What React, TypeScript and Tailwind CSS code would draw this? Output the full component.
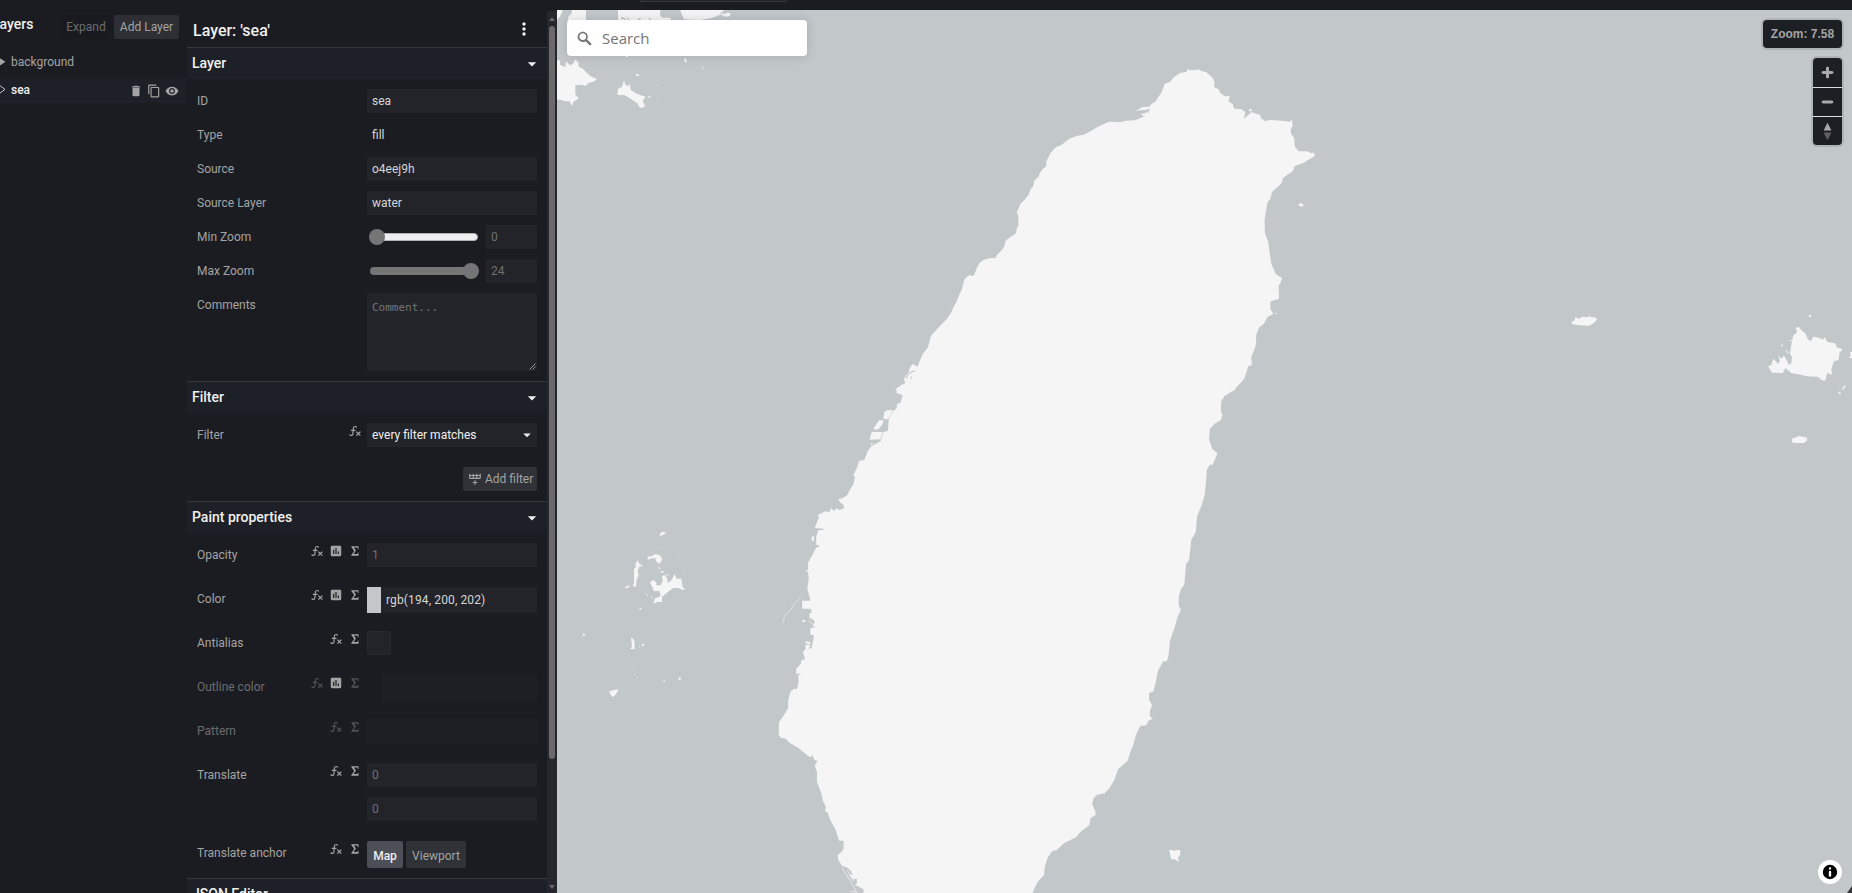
import type { ReactNode } from "react";
import { MdArrowDropDown, MdContentCopy, MdDelete, MdInsertChart, MdMoreVert, MdVisibility } from "react-icons/md";

const FX =
  "M12.42,5.29C11.32,5.19 10.35,6 10.25,7.11L10,10H12.82V12H9.82L9.38,17.07C9.18,19.27 7.24,20.9 5.04,20.7C3.79,20.59 2.66,19.9 2,18.83L3.5,17.33C3.83,18.38 4.96,18.97 6,18.63C6.78,18.39 7.33,17.7 7.4,16.89L7.82,12H4.82V10H8L8.27,6.93C8.46,4.73 10.39,3.1 12.6,3.28C13.86,3.39 15,4.09 15.66,5.17L14.16,6.67C13.91,5.9 13.23,5.36 12.42,5.29M22,13.65L20.59,12.24L17.76,15.07L14.93,12.24L13.5,13.65L16.35,16.5L13.5,19.33L14.93,20.75L17.76,17.89L20.59,20.72L22,19.31L19.17,16.5L22,13.65Z";
const SIGMA = "M5,4H18V9H17L16,6H10.06L13.65,11.13L9.54,17H16L17,15H18V20H5L10.6,12L5,4Z";
const TABLE_PLUS =
  "M22,10A2,2 0 0,1 20,12H4A2,2 0 0,1 2,10V3H4V5H8V3H10V5H14V3H16V5H20V3H22V10M4,10H8V7H4V10M10,10H14V7H10V10M20,10V7H16V10H20M11,14H13V17H16V19H13V22H11V19H8V17H11V14Z";

function Glyph({ d }: { d: string }) {
  return (
    <svg width="14" height="14" viewBox="0 0 24 24" fill="currentColor">
      <path d={d} />
    </svg>
  );
}

type IconKind = "fx" | "chart" | "sigma";

function RowIcons({ kinds, dim }: { kinds: IconKind[]; dim?: boolean }) {
  return (
    <div className="flex h-4 items-center gap-[5px] pr-[5px] text-[#a4a4a4]">
      {kinds.map((k) => (
        <span key={k} className={dim && k !== "chart" ? "opacity-40" : ""}>
          {k === "fx" && <Glyph d={FX} />}
          {k === "chart" && <MdInsertChart size={14} />}
          {k === "sigma" && <Glyph d={SIGMA} />}
        </span>
      ))}
    </div>
  );
}

function Row({ label, icons = [], dim, children }: { label: string; icons?: IconKind[]; dim?: boolean; children: ReactNode }) {
  return (
    <div className="flex items-start px-[10px]">
      <div className="flex w-[170px] justify-between">
        <span className={dim ? "leading-6 text-[#6b6c6f]" : "leading-6 text-[#a4a4a4]"}>{label}</span>
        <RowIcons kinds={icons} dim={dim} />
      </div>
      <div className="w-[170px]">{children}</div>
    </div>
  );
}

function Field({ value, hint, dim }: { value?: string; hint?: string; dim?: boolean }) {
  return (
    <div className={dim ? "h-6 bg-[#1e1f24]" : "h-6 bg-[#232429] px-[5px] leading-6 text-[#d6d6d6]"}>
      {value}
      <span className="text-[#6f7073]">{hint}</span>
    </div>
  );
}

function SectionHeader({ title }: { title: string }) {
  return (
    <div className="flex h-8 shrink-0 items-center justify-between border-t border-[#36383e] bg-[#1d2026] pr-[5px] pl-[5px]">
      <span className="pb-[2px] text-sm font-medium text-[#f0f0f0]">{title}</span>
      <MdArrowDropDown size={20} className="text-[#f0f0f0]" />
    </div>
  );
}

function Slider({ value, full }: { value: string; full?: boolean }) {
  return (
    <div className="flex items-center justify-between">
      <div
        className={
          full
            ? "ml-[3px] flex h-2 w-[108px] items-center justify-end rounded-full bg-[#757575]"
            : "ml-[3px] flex h-2 w-[108px] items-center rounded-full border border-[#b2b2b2] bg-[#efefef]"
        }
      >
        <div className={full ? "-mr-[1px] size-4 shrink-0 rounded-full bg-[#757575]" : "-ml-[2px] size-4 shrink-0 rounded-full bg-[#757575]"} />
      </div>
      <div className="w-[51px]">
        <Field hint={value} />
      </div>
    </div>
  );
}

function LayerList() {
  return (
    <div className="w-[187px] shrink-0 overflow-hidden pt-[5px]">
      <div className="flex h-6 justify-between pr-2">
        <span className="-ml-[8px] text-sm leading-[18px] font-medium text-[#f0f0f0]">Layers</span>
        <div className="flex gap-[3px]">
          <div className="w-[50px] rounded-xs bg-[#191a1f] text-center leading-6 text-[#6b6c70]">Expand</div>
          <div className="w-[65px] rounded-xs bg-[#2d2f34] text-center leading-6 text-[#a4a4a4]">Add Layer</div>
        </div>
      </div>
      <div className="mt-[10px] flex h-[26px] items-center text-[#a4a4a4]">
        <svg width="11" height="12" viewBox="0 0 11 12" fill="currentColor">
          <path d="M-2 .8L5.5 5.8L-2 10.8Z" />
        </svg>
        background
      </div>
      <div className="mt-[2px] flex h-[26px] items-center bg-[#1d2026] pr-2 text-[#f0f0f0]">
        <svg width="11" height="12" viewBox="0 0 11 12" fill="none" stroke="#c4c4c4">
          <path d="M-2 .2L5 5.4L-2 10.6Z" />
        </svg>
        <span className="flex-1 font-medium">sea</span>
        <div className="flex gap-1 pt-[2px] text-[#a4a4a4]">
          <MdDelete size={14} />
          <MdContentCopy size={14} />
          <MdVisibility size={14} />
        </div>
      </div>
    </div>
  );
}

function LayerEditor() {
  return (
    <div className="flex w-[360px] shrink-0 flex-col overflow-hidden">
      <div className="flex h-[37px] shrink-0 items-center justify-between pr-[13px] pl-[6px] text-[#f0f0f0]">
        <span className="pt-[5px] text-base font-medium">Layer: &apos;sea&apos;</span>
        <MdMoreVert size={20} />
      </div>
      <SectionHeader title="Layer" />
      <div className="flex flex-col gap-[10px] py-[10px]">
        <Row label="ID"><Field value="sea" /></Row>
        <Row label="Type"><div className="h-6 px-[5px] leading-6 text-[#d6d6d6]">fill</div></Row>
        <Row label="Source"><Field value="o4eej9h" /></Row>
        <Row label="Source Layer"><Field value="water" /></Row>
        <Row label="Min Zoom"><Slider value="0" /></Row>
        <Row label="Max Zoom"><Slider value="24" full /></Row>
        <Row label="Comments">
          <div className="flex h-[78px] justify-between bg-[#232429] px-[5px] pt-[7px] pr-px font-['DejaVu_Sans_Mono',monospace] text-[11px] leading-4 text-[#75767a]">
            Comment...
            <svg width="7" height="7" viewBox="0 0 7 7" className="mb-px self-end" stroke="#a4a4a4" strokeWidth=".9">
              <path d="M.5 6.5L6.5 .5M3.5 6.5L6.5 3.5" />
            </svg>
          </div>
        </Row>
      </div>
      <SectionHeader title="Filter" />
      <div className="flex flex-col gap-5 py-[10px]">
        <Row label="Filter" icons={["fx"]}>
          <div className="flex h-6 items-center justify-between bg-[#232429] pr-px pl-[5px] text-[#f0f0f0]">
            every filter matches
            <MdArrowDropDown size={18} />
          </div>
        </Row>
        <div className="mr-[10px] flex h-6 w-[74px] items-center gap-[3px] self-end rounded-xs bg-[#303237] pl-[5px] whitespace-nowrap text-[#a4a4a4]">
          <Glyph d={TABLE_PLUS} />
          Add filter
        </div>
      </div>
      <SectionHeader title="Paint properties" />
      <div className="flex flex-col py-[10px]">
        <div className="h-11"><Row label="Opacity" icons={["fx", "chart", "sigma"]}><Field hint="1" /></Row></div>
        <div className="h-11">
          <Row label="Color" icons={["fx", "chart", "sigma"]}>
            <div className="flex h-[26px] bg-[#232429] leading-[26px] tracking-[0.13px] text-[#d6d6d6]">
              <div className="mr-[5px] w-[14px] bg-[#c2c8ca]" />
              rgb(194, 200, 202)
            </div>
          </Row>
        </div>
        <div className="h-11">
          <Row label="Antialias" icons={["fx", "sigma"]}>
            <div className="size-6 rounded-xs border border-[#28292e] bg-[#232429]" />
          </Row>
        </div>
        <div className="h-11">
          <Row label="Outline color" icons={["fx", "chart", "sigma"]} dim>
            <div className="ml-[14px] h-[26px] bg-[#1e1f24]" />
          </Row>
        </div>
        <div className="h-11"><Row label="Pattern" icons={["fx", "sigma"]} dim><Field dim /></Row></div>
        <div className="h-[78px]">
          <Row label="Translate" icons={["fx", "sigma"]}>
            <div className="flex flex-col gap-[10px]">
              <Field hint="0" />
              <Field hint="0" />
            </div>
          </Row>
        </div>
        <Row label="Translate anchor" icons={["fx", "sigma"]}>
          <div className="flex h-[27px] gap-[3px] leading-[30px]">
            <div className="w-9 rounded-xs bg-[#4c4e58] text-center font-medium text-[#f0f0f0]">Map</div>
            <div className="w-[60px] rounded-xs bg-[#303237] text-center text-[#a4a4a4]">Viewport</div>
          </div>
        </Row>
      </div>
      <SectionHeader title="JSON Editor" />
    </div>
  );
}

function ScrollBar() {
  return (
    <div className="mt-px flex w-[10px] shrink-0 flex-col items-center bg-[#26272c] pb-[3px]">
      <svg width="6" height="15" viewBox="0 0 6 15" fill="#6a6a6a"><path d="M0 10L3 6L6 10Z" /></svg>
      <div className="h-[733px] w-[6px] rounded-full bg-[#6a6a6a]" />
      <div className="flex-1" />
      <svg width="6" height="5" viewBox="0 0 6 5" fill="#6a6a6a"><path d="M0 0L3 4L6 0Z" /></svg>
    </div>
  );
}

function MapCanvas() {
  return (
    <svg className="block h-full w-full" viewBox="557 10 1295 883" fill="#f5f5f5">
      {/* northern half of the main island */}
      <g transform="translate(760 50) scale(.3699 .33333)">
        <path d="M366 1022L372 1010L384 1014L390 1002L396 992L388 990L396 974L402 968L404 956L412 942L426 950L432 932L440 912L454 892L462 858L478 838L490 824L504 808L515 792L522 774L532 754L538 736L546 718L552 690L558 682L567 674L572 679L579 675L586 654L594 638L604 630L620 625L638 624L640 616L652 602L660 590L664 572L678 560L692 550L694 536L699 524L698 496L694 488L704 462L718 446L726 434L732 416L738 410L742 392L754 378L756 370L764 358L774 348L774 334L786 308L800 292L816 284L836 266L856 258L876 254L898 241L914 230L934 220L944 215L974 217L990 212L1014 211L1034 202L1050 190L1054 176L1040 180L1016 182L1034 171L1052 170L1056 164L1070 154L1074 146L1086 126L1094 102L1108 96L1120 80L1136 69L1154 65L1156 56L1162 61L1182 60L1184 57L1194 64L1206 66L1224 84L1228 94L1228 112L1240 118L1244 128L1256 139L1270 138L1266 154L1278 162L1282 176L1302 178L1312 186L1308 206L1320 196L1328 187L1352 194L1354 204L1366 214L1376 210L1412 212L1432 215L1440 208L1438 220L1441 225L1434 240L1436 252L1444 264L1446 290L1456 304L1480 304L1490 310L1496 307L1500 318L1486 327L1470 338L1446 348L1440 364L1424 376L1414 384L1410 400L1394 416L1384 426L1380 446L1372 456L1368 482L1364 510L1365 545L1368 560L1374 575L1378 610L1382 640L1394 672L1411 684L1406 702L1402 706L1403 746L1380 754L1380 778L1388 792L1372 800L1362 822L1350 832L1342 852L1340 888L1328 922L1330 946L1320 948L1310 984L1300 998L1286 1008L1282 1022Z" />
        <path d="M1454 465L1462 459L1470 465L1466 471ZM1392 789L1396 789L1396 792L1392 792ZM1322 178L1328 178L1331 184L1322 183ZM1030 192L1040 190L1050 184L1046 196L1034 197Z" />
        <path d="M392 994L400 974L412 964L420 964M402 1000L410 980" stroke="#c2c8ca" strokeWidth="3" fill="none" />
      </g>
      {/* southern half of the main island */}
      <g transform="translate(740 380) scale(.3699 .33333)">
        <path d="M442 -4L448 10L434 16L422 38L440 46L434 68L424 72L424 84L414 94L402 118L400 152L388 156L380 184L356 198L346 212L336 240L322 242L316 264L306 286L311 292L306 314L298 328L290 346L276 355L266 358L272 368L281 376L280 386L266 390L262 384L254 392L246 385L242 396L230 394L210 406L214 410L202 444L226 446L226 450L212 450L206 470L206 494L216 498L206 503L196 524L184 548L184 570L178 573L184 577L186 596L182 626L188 650L190 662L168 662L168 686L192 686L194 698L188 700L188 714L196 718L203 726L196 736L204 742L190 744L190 764L200 766L194 804L184 806L192 794L176 796L178 806L170 816L176 838L166 840L164 852L152 866L152 882L166 880L158 886L158 908L154 928L146 926L136 936L130 962L130 984L122 1000L105 1028L105 1064L110 1073L124 1076L134 1088L158 1104L184 1128L194 1132L194 1122L202 1140L210 1143L202 1156L208 1176L208 1206L220 1240L224 1262L232 1280L230 1296L236 1296L244 1320L258 1348L268 1382L280 1382L280 1406L272 1418L264 1426L266 1440L276 1458L288 1462L300 1472L304 1484L294 1484L306 1498L316 1496L316 1510L310 1514L324 1522L334 1528L334 1542L790 1542L798 1520L806 1504L822 1486L824 1460L832 1432L844 1414L856 1410L876 1390L908 1372L918 1358L944 1336L948 1314L962 1304L960 1292L952 1272L956 1254L966 1244L986 1240L1000 1222L1012 1200L1022 1168L1048 1142L1054 1120L1064 1092L1070 1066L1082 1038L1098 1036L1106 1020L1116 1018L1108 1008L1108 992L1114 976L1106 960L1106 940L1118 934L1124 906L1130 872L1144 844L1154 844L1158 830L1163 780L1174 746L1184 708L1192 690L1186 676L1186 650L1192 628L1201 614L1206 552L1214 540L1220 480L1232 456L1236 408L1248 376L1256 346L1261 292L1262 270L1270 254L1278 254L1284 238L1291 220L1276 206L1268 178L1270 148L1282 132L1300 120L1304 106L1300 92L1301 64L1310 48L1336 30L1362 -4Z" />
        <path d="M390 96L398 91L414 91L404 112L398 118L388 117ZM376 121L388 121L386 130L378 144L370 149L360 147ZM356 156L386 156L380 178L350 179ZM194 470L200 468L200 482L194 483ZM355 188L362 192L354 195ZM168 721L176 721L176 726L168 726ZM176 784L190 786L190 792L180 792ZM1160 1410L1168 1410L1172 1413L1184 1410L1190 1410L1190 1424L1184 1434L1187 1447L1176 1438L1166 1438Z" />
        <path d="M116 730L120 710L138 688L144 676L164 650" fill="none" stroke="#e3e6e7" strokeWidth="2.2" />
        <path d="M276 1464L302 1510L316 1538M290 1470L308 1506M298 1534L316 1536M186 722L196 732" fill="none" stroke="#f5f5f5" strokeWidth="2" />
      </g>
      {/* north-western coast and offshore islands */}
      <g transform="translate(550 0) scale(.33333)">
        <path d="M21 30H38L34 42L28 52L21 60ZM66 30H108V66H52L56 48L64 42ZM204 30H332V50L362 54V64H204ZM362 30H392V36L402 58L452 60L484 54L508 46L510 42L526 50L540 48L541 40L530 38L526 42L508 39L520 34V30ZM21 180L30 182L30 194L46 202L48 184L60 196L68 192L76 178L86 188L86 200L98 206L114 222L124 230L140 236L134 244L114 250L108 258L92 254L76 256L76 284L86 294L76 302L70 306L66 318L58 304L46 304L34 300L21 298ZM222 240L226 254L236 258L240 250L242 270L262 282L286 290L278 304L286 320L270 324L262 310L244 298L222 284L212 286L202 284L204 266L216 260Z" />
        <path d="M332 30H362V34L350 38L356 50L340 54L330 46Z" fill="#c2c8ca" />
        <path d="M402 172L408 178L411 186L405 188ZM258 223H267V228H258ZM294 288L304 291L297 294ZM456 202L462 206L458 208ZM226 166H234V171H228Z" />
        <path d="M206 479L212 482H206ZM303 231H306V234H303ZM319 254H323V257H319ZM363 263H366V266H363ZM323 298L327 302L323 301Z" fill="#dfe2e3" />
        <path d="M216 58V52L228 60M230 52L238 60M262 60L272 55M296 54L304 60" fill="none" stroke="#aeb3b5" strokeWidth="3" />
      </g>
      {/* strait archipelago */}
      <g transform="translate(560 500) scale(.33333)">
        <path d="M298 104L306 95L317 97L314 102L302 108ZM262 170L276 168L286 162L300 166L306 176L304 184L298 192L288 184L286 174L270 176L264 180ZM234 181L238 192L250 197L238 200L233 212L236 226L230 240L228 260L218 258L222 250L222 206L228 202L226 192ZM194 262L206 256L210 260L198 265ZM294 200L302 204L298 208ZM303 213H310V218H303ZM270 246L282 240L290 250L288 256L302 256L308 242L306 228L316 226L322 238L322 248L332 244L338 234L343 222L350 236L364 236L368 262L376 268L366 270L358 264L340 264L326 274L314 284L306 290L306 306L292 306L280 311L284 296L302 288L298 272L282 274ZM236 328L242 324L246 326L240 330ZM68 400L78 404L70 408ZM213 413L223 420L224 448L210 447L216 440ZM246 432H252V438H246ZM237 437H240V440H237ZM222 522H225V525H222ZM308 541L315 541L314 546ZM356 531L363 533L360 543L356 538ZM147 574L175 567L170 580L159 592L152 584ZM261 285H264V288H261ZM273 290H276V294H273ZM256 279H259V282H256Z" />
        <path d="M316 223H328V228H316ZM354 158H357V161H354ZM349 175H354V177H349ZM369 204H372V207H369ZM294 145H297V147H294ZM219 504H222V507H219ZM231 530H234V534H231Z" fill="#d6dadb" />
      </g>
      {/* eastern islands */}
      <g transform="translate(1540 290) scale(.33333)">
        <path d="M93 96L103 92L106 81L116 86L128 80L144 82L148 78L154 82L164 82L172 88L162 98L148 107L118 106L98 103ZM807 75H813V81H807ZM764 114L776 111L784 120L796 130L804 148L812 154L820 140L828 142L838 144L848 149L854 142L862 156L886 160L890 172L907 178L898 190L896 210L882 214L874 236L876 254L862 248L856 272L846 271L834 260L800 259L782 254L754 249L736 234L728 250L708 248L696 248L684 228L694 226L700 206L714 222L720 212L714 196L724 206L732 197L740 210L746 224L754 220L756 200L750 192L752 176L756 154L747 150L757 150L760 136L770 128L770 117ZM723 166L731 163L725 171ZM733 177L746 187L744 191ZM936 186V204H926L932 198L930 187ZM914 286L918 288L908 300L906 297ZM894 305L902 306L901 315ZM756 446L768 442L776 438L788 440L802 443L800 452L792 459L764 459L756 456Z" />
      </g>
      <path d="M1852 886V893H1847Z" fill="#333538" />
    </svg>
  );
}

function MapView() {
  return (
    <div className="relative min-w-0 flex-1 bg-[#c2c8ca]">
      <MapCanvas />
      <div className="absolute top-[10px] left-[10px] flex h-9 w-60 items-center rounded bg-white pl-[8px] shadow-[0_0_10px_2px_rgba(0,0,0,0.1)]">
        <svg width="19" height="19" viewBox="0 0 18 18" fill="#757575">
          <path d="M7.4 2.5c-2.7 0-4.9 2.2-4.9 4.9s2.2 4.9 4.9 4.9c1 0 1.8-.2 2.5-.8l3.7 3.7c.2.2.4.3.8.3.7 0 1.1-.4 1.1-1.1 0-.3-.1-.5-.3-.8L11.4 10c.4-.8.8-1.6.8-2.5.1-2.8-2.1-5-4.8-5zm0 1.6c1.8 0 3.2 1.4 3.2 3.2s-1.4 3.2-3.2 3.2-3.3-1.3-3.3-3.1 1.4-3.3 3.3-3.3z" />
        </svg>
        <span className="ml-[8px] font-['Open_Sans',sans-serif] text-[15px] text-[#757575]">Search</span>
      </div>
      <div className="absolute top-[10px] right-[10px] flex flex-col items-end gap-[10px]">
        <div className="h-7 w-[79px] rounded bg-[#1c1f24] text-center font-['Liberation_Sans',sans-serif] text-xs leading-7 font-bold text-[#a4a4a4] shadow-[0_0_0_2px_rgba(0,0,0,0.1)]">
          Zoom: 7.58
        </div>
        <div className="w-[29px] divide-y divide-[#dddddd] overflow-hidden rounded bg-[#1c1f24] text-[#a4a4a4] shadow-[0_0_0_2px_rgba(0,0,0,0.1)]">
          <svg className="block h-[30px] w-[29px]" viewBox="0 0 29 29" fill="#a9a9a9">
            <path d="M14.5 8.5c-.75 0-1.5.75-1.5 1.5v3h-3c-.75 0-1.5.75-1.5 1.5S9.25 16 10 16h3v3c0 .75.75 1.5 1.5 1.5S16 19.75 16 19v-3h3c.75 0 1.5-.75 1.5-1.5S19.75 13 19 13h-3v-3c0-.75-.75-1.5-1.5-1.5z" />
          </svg>
          <svg className="block h-[29px] w-[29px]" viewBox="0 0 29 29" fill="#a9a9a9">
            <path d="M10 13c-.75 0-1.5.75-1.5 1.5S9.25 16 10 16h9c.75 0 1.5-.75 1.5-1.5S19.75 13 19 13h-9z" />
          </svg>
          <svg className="block h-[28px] w-[29px]" viewBox="0 0 29 29" fill="#a9a9a9">
            <path d="M10.5 14l4-8 4 8h-8z" />
            <path d="M10.5 16l4 8 4-8h-8z" fill="#5f6063" />
          </svg>
        </div>
      </div>
      <div className="absolute right-[10px] bottom-[9px] flex size-6 items-center justify-center rounded-full bg-white">
        <svg width="24" height="24" viewBox="0 0 20 20" fillRule="evenodd">
          <path d="M4 10a6 6 0 1 0 12 0 6 6 0 1 0-12 0m5-3a1 1 0 1 0 2 0 1 1 0 1 0-2 0m0 3a1 1 0 1 1 2 0v3a1 1 0 1 1-2 0" />
        </svg>
      </div>
    </div>
  );
}

export default function App() {
  return (
    <div className="flex h-[893px] w-[1852px] flex-col overflow-hidden bg-[#1b1c21] font-[Roboto,sans-serif] text-xs">
      <div className="h-[10px] shrink-0 pl-[640px]">
        <div className="h-[2px] w-[147px] border border-t-0 border-[#36383e] bg-[#232429]" />
      </div>
      <div className="flex min-h-0 flex-1">
        <LayerList />
        <LayerEditor />
        <ScrollBar />
        <MapView />
      </div>
    </div>
  );
}
